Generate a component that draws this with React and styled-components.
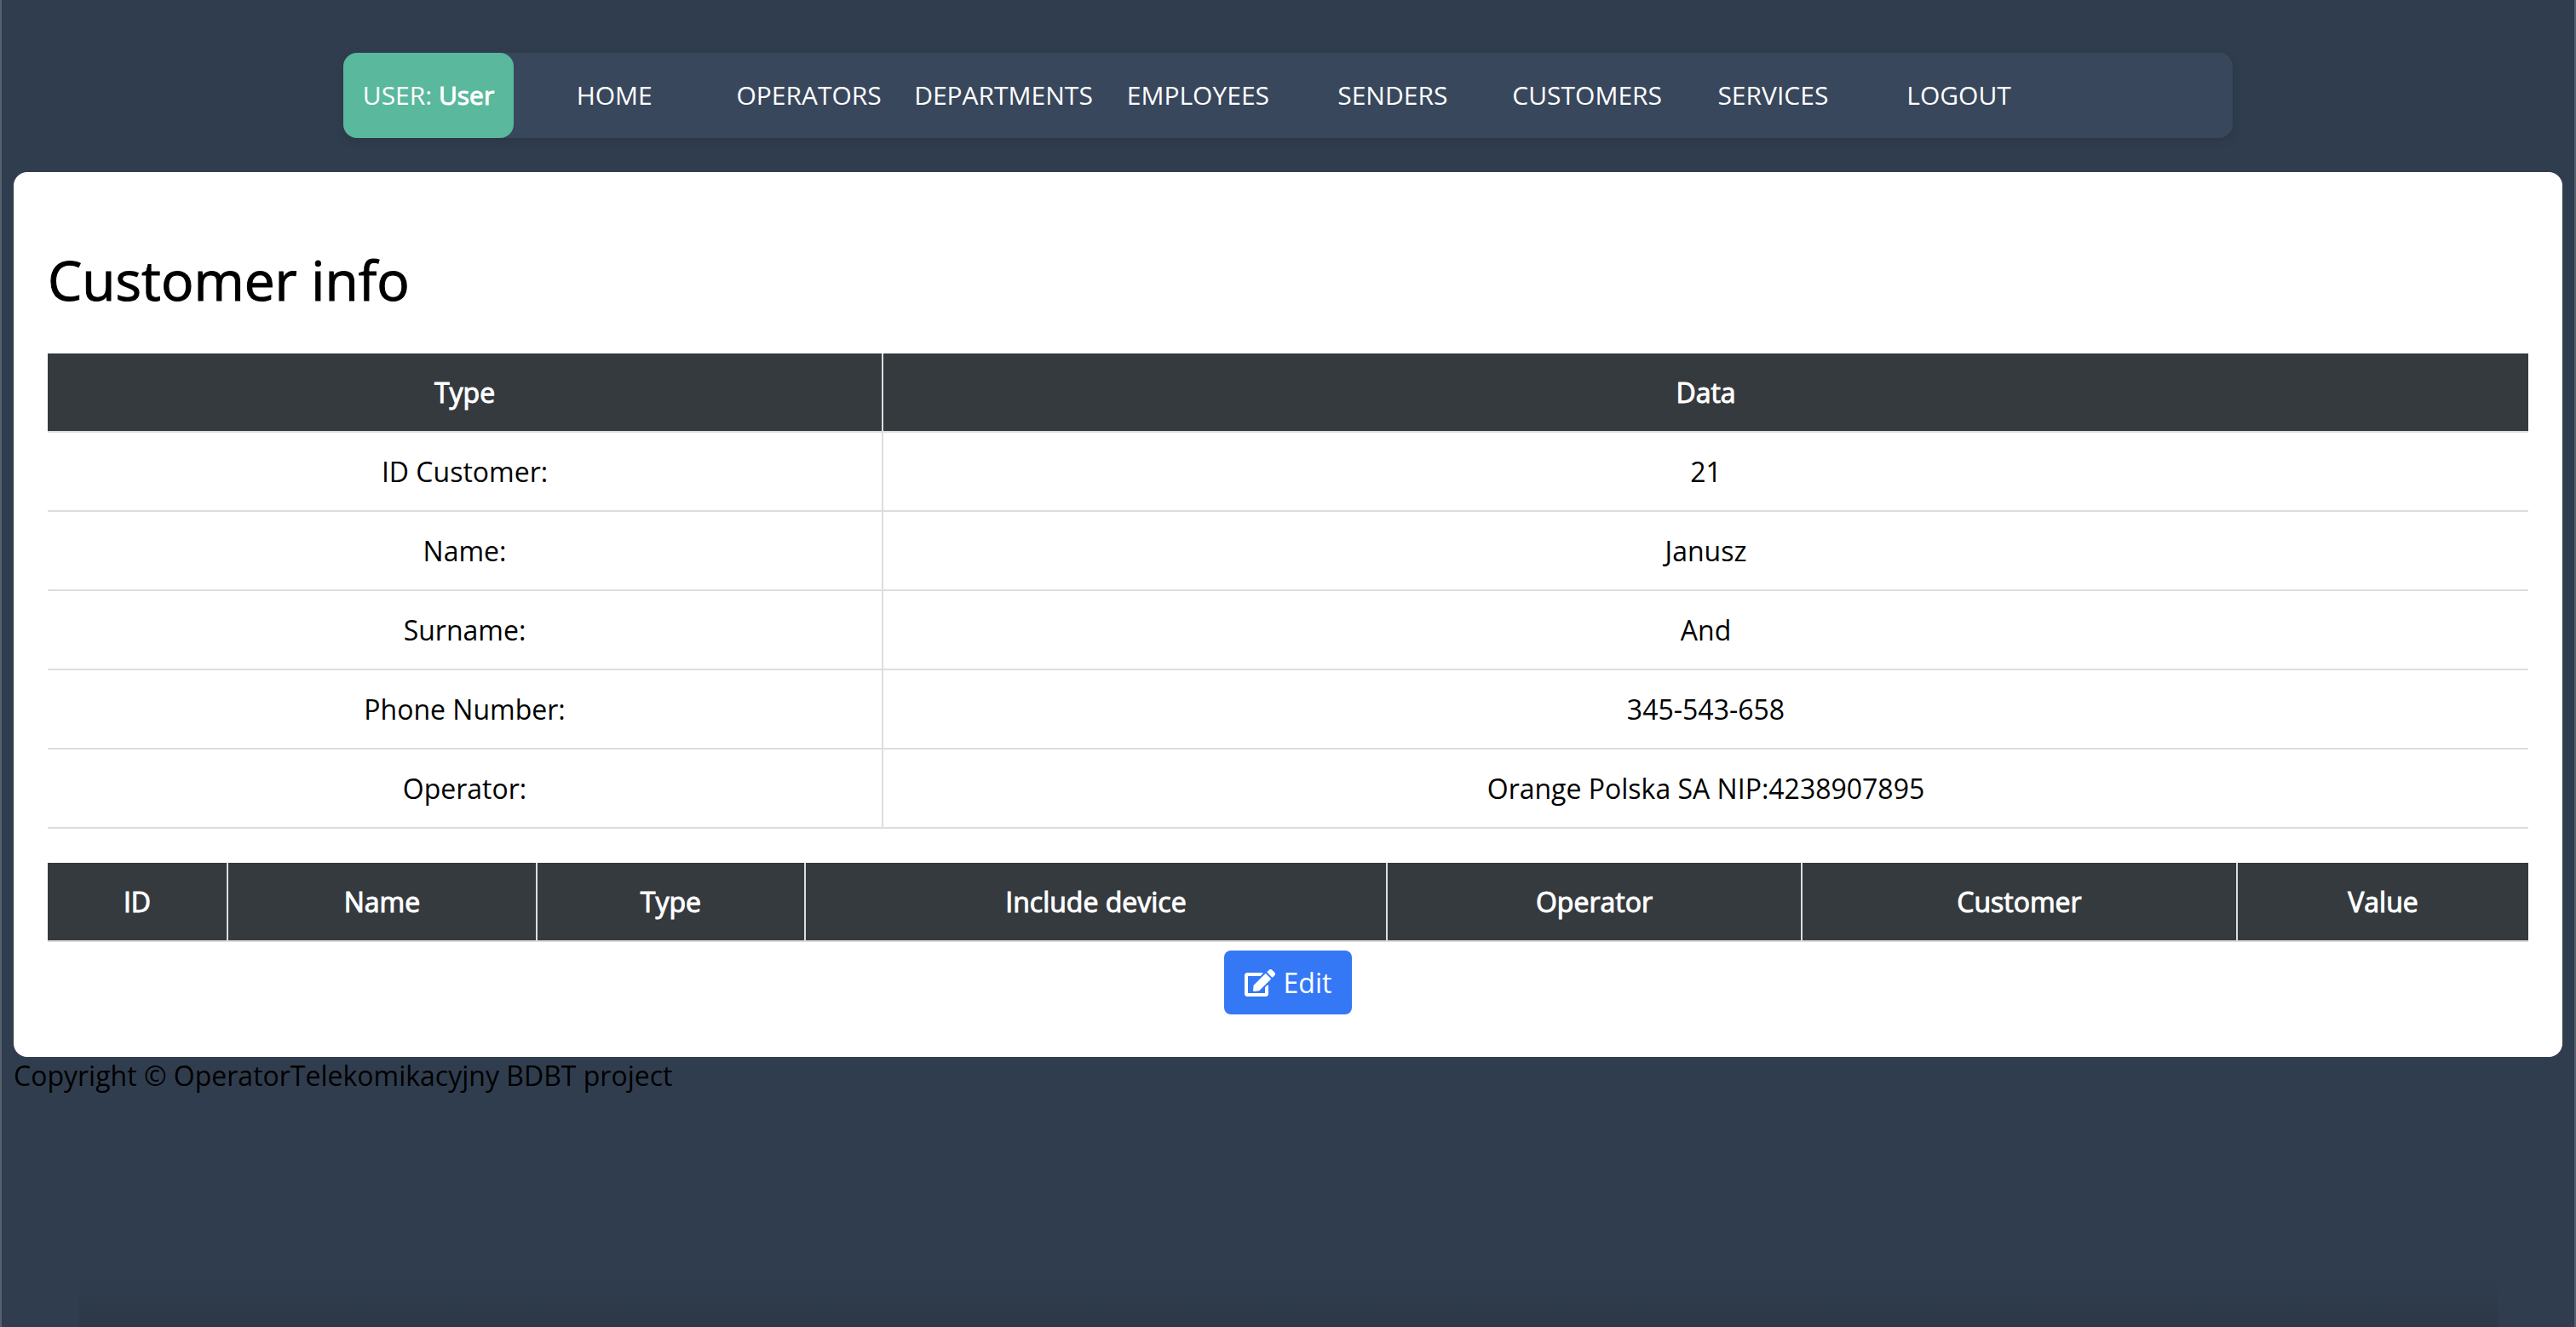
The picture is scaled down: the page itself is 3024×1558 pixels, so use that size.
import React from "react";
import styled, { createGlobalStyle } from "styled-components";
import { FaEdit } from "react-icons/fa";

const GlobalStyle = createGlobalStyle`
  * { box-sizing: border-box; }
  body {
    margin: 0;
    background: #303d4e;
    color: #000;
    font: 32px/43px "Open Sans", "Noto Sans", sans-serif;
  }
`;

const Page = styled.div`
  min-height: 100vh;
  padding: 62px 14px 0;
  border: solid #56616f;
  border-width: 0 2px;
  background: linear-gradient(to top, rgba(0, 0, 0, 0.08), transparent) bottom / 94% 60px no-repeat;
`;

const Nav = styled.nav`
  display: grid;
  grid-template-columns: 500fr repeat(6, 551fr) 500fr 551fr 508fr;
  column-gap: 8px;
  width: 100%;
  max-width: 2218px;
  height: 100px;
  margin: 0 auto 40px;
  border-radius: 16px;
  background: #38475c;
  box-shadow: 0 4px 12px rgba(0, 0, 0, 0.1);
`;

const NavLink = styled.a`
  display: flex;
  align-items: center;
  justify-content: center;
  padding-bottom: 2px;
  border-radius: 16px;
  background: ${(p) => (p.$active ? "#5ab89d" : "transparent")};
  color: #fff;
  font-size: 30px;
  text-decoration: none;
  white-space: pre;
`;

const UserName = styled.span`
  -webkit-text-stroke: 1px currentColor;
`;

const Card = styled.main`
  padding: 40px 40px 50px;
  border-radius: 16px;
  background: #fff;
`;

const Title = styled.h1`
  margin: 43px 0;
  font-size: 64px;
  font-weight: 400;
  line-height: 87px;
  -webkit-text-stroke: 1px currentColor;
`;

const Table = styled.table`
  width: 100%;
  table-layout: fixed;
  border-spacing: 0;
  margin-top: ${(p) => (p.$spaced ? "40px" : "0")};
`;

const cell = `
  padding: 24px 0;
  border-bottom: 2px solid #ddd;
  text-align: center;
  font-weight: 400;
  &:not(:last-child) { border-right: 2px solid #ddd; }
`;

const HeadCell = styled.th`
  ${cell}
  background: #353a3e;
  background-clip: padding-box;
  color: #fff;
  -webkit-text-stroke: 1px currentColor;
`;

const Cell = styled.td`
  ${cell}
`;

const Actions = styled.div`
  display: flex;
  justify-content: center;
  margin-top: 10px;
`;

const EditButton = styled.button`
  display: flex;
  align-items: center;
  gap: 10px;
  padding: 16px 24px;
  border: 0;
  border-radius: 8px;
  background: #3478f6;
  color: #fff;
  font: inherit;
`;

const links = ["HOME", "OPERATORS", "DEPARTMENTS", "EMPLOYEES", "SENDERS", "CUSTOMERS", "SERVICES", "LOGOUT"];

const details = [
  ["ID Customer:", "21"],
  ["Name:", "Janusz"],
  ["Surname:", "And"],
  ["Phone Number:", "345-543-658"],
  ["Operator:", "Orange Polska SA NIP:4238907895"],
];

const services = [
  ["ID", 212],
  ["Name", 363],
  ["Type", 315],
  ["Include device", 683],
  ["Operator", 487],
  ["Customer", 511],
  ["Value", 341],
];

const Col = styled.col`
  width: ${(p) => (p.$part / p.$whole) * 100}%;
`;

export default function App() {
  return (
    <>
      <GlobalStyle />
      <Page>
        <Nav>
          <NavLink href="#" $active>USER: <UserName>User</UserName></NavLink>
          {links.map((label) => (
            <NavLink href="#" key={label}>{label}</NavLink>
          ))}
        </Nav>
        <Card>
          <Title>Customer info</Title>
          <Table>
            <colgroup>
              <Col $part={981} $whole={2912} />
              <Col $part={1931} $whole={2912} />
            </colgroup>
            <thead>
              <tr>
                <HeadCell>Type</HeadCell>
                <HeadCell>Data</HeadCell>
              </tr>
            </thead>
            <tbody>
              {details.map(([name, value]) => (
                <tr key={name}>
                  <Cell>{name}</Cell>
                  <Cell>{value}</Cell>
                </tr>
              ))}
            </tbody>
          </Table>
          <Table $spaced>
            <colgroup>
              {services.map(([name, part]) => (
                <Col key={name} $part={part} $whole={2912} />
              ))}
            </colgroup>
            <thead>
              <tr>
                {services.map(([name]) => (
                  <HeadCell key={name}>{name}</HeadCell>
                ))}
              </tr>
            </thead>
          </Table>
          <Actions>
            <EditButton type="button">
              <FaEdit size={36} aria-hidden="true" />
              Edit
            </EditButton>
          </Actions>
        </Card>
        <footer>Copyright © OperatorTelekomikacyjny BDBT project</footer>
      </Page>
    </>
  );
}
